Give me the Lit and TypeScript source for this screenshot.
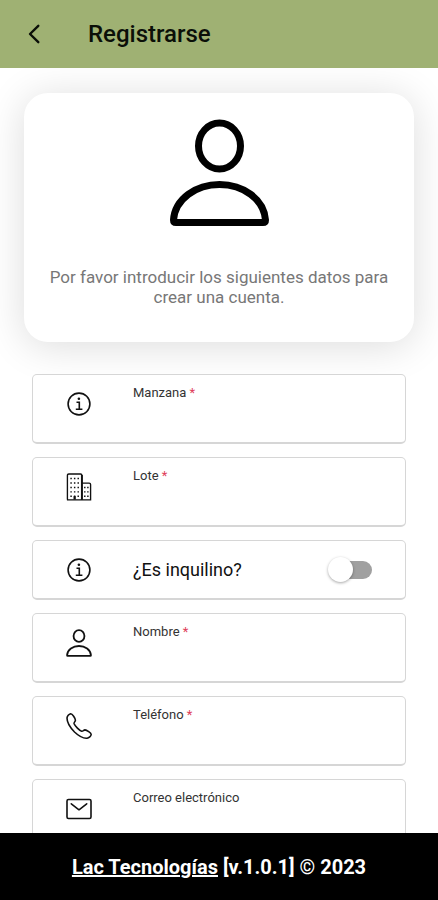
import { LitElement, html, svg, css, nothing } from "lit";
import { customElement, property, state } from "lit/decorators.js";

const icons = {
  user: {
    box: "0 0 99 108",
    art: svg`<g fill="none" stroke="currentColor" stroke-width="7" stroke-linejoin="round">
      <ellipse cx="49.5" cy="27" rx="21" ry="23" />
      <path d="M6 103.500H93Q95.500 103.500 95.500 101C94 80 73 65.500 49.500 65.500S5 80 3.500 101Q3.500 103.500 6 103.500Z" />
    </g>`,
  },
  info: {
    box: "0 0 26 26",
    art: svg`<g fill="none" stroke="currentColor" stroke-width="1.600">
      <circle cx="13" cy="13" r="10.900" />
      <path d="M10.500 11.200H13.300V18M9.800 18.200H16.400" />
      <circle cx="12.900" cy="7.700" r="1.300" fill="currentColor" stroke="none" />
    </g>`,
  },
  building: {
    box: "0 0 26 29",
    art: svg`<g fill="none" stroke="currentColor" stroke-width="1.400">
      <path d="M1 27.500V2.500Q1 1 2.500 1H14.500Q16 1 16 2.500V27.500M16 10.500H23.500Q25 10.500 25 12V27.500M0.500 27.800H25.700" />
      <path d="M16 2V27.500" stroke-width="2" />
      <g stroke-width="1.500" stroke-dasharray="1.500 3.100">
        <path d="M4.800 5V27M8.500 5V27M12.200 5V27M19 14.200V27M22.200 14.200V27" />
      </g>
      <path d="M8.500 24V27.500" stroke-width="2.400" />
    </g>`,
  },
  phone: {
    box: "0 0 26 27",
    art: svg`<path fill="none" stroke="currentColor" stroke-width="1.600" stroke-linejoin="round"
      d="M4.600 1.200C3 1.600 1 3.600 1 5.600C1 10.500 4.500 15.500 8.500 19.500C12.500 23.300 17.500 26 21 25.700C23 25.500 25 23.500 25.200 22C25.300 20.500 20.500 17.400 19 17.400C17.600 17.500 17 19 15.700 18.800C13.500 18 9 13.500 8.100 11.300C7.700 9.800 9.400 9.200 9.400 7.700C9.400 6 6.300 1 4.600 1.200Z" />`,
  },
  mail: {
    box: "0 0 26 21",
    art: svg`<g fill="none" stroke="currentColor" stroke-width="1.600" stroke-linejoin="round" stroke-linecap="round">
      <rect x="1" y="1" width="24" height="19" rx="1.500" />
      <path d="M5.300 5.300L13 11.300L20.700 5.300" />
    </g>`,
  },
};
type IconName = keyof typeof icons;

@customElement("line-icon")
class LineIcon extends LitElement {
  @property() name: IconName = "user";
  static styles = css`
    :host { display: block; }
    svg { display: block; width: 100%; height: 100%; }
  `;
  render() {
    const icon = icons[this.name];
    return html`<svg viewBox=${icon.box} aria-hidden="true">${icon.art}</svg>`;
  }
}

interface Field {
  id: string;
  label: string;
  icon: IconName;
  type: string;
  required: boolean;
}

@customElement("app-root")
class AppRoot extends LitElement {
  @state() private tenant = false;

  private lotFields: Field[] = [
    { id: "manzana", label: "Manzana", icon: "info", type: "text", required: true },
    { id: "lote", label: "Lote", icon: "building", type: "text", required: true },
  ];
  private contactFields: Field[] = [
    { id: "nombre", label: "Nombre", icon: "user", type: "text", required: true },
    { id: "telefono", label: "Teléfono", icon: "phone", type: "tel", required: true },
    { id: "correo", label: "Correo electrónico", icon: "mail", type: "email", required: false },
  ];

  static styles = css`
    :host {
      display: flex;
      flex-direction: column;
      height: 100vh;
      background: #fff;
      color: #111;
      font-family: Roboto, "Liberation Sans", sans-serif;
    }
    * { box-sizing: border-box; }
    .bar {
      flex: none;
      display: flex;
      align-items: center;
      gap: 32px;
      height: 68px;
      padding: 0 12px;
      background: #9fb173;
    }
    .back {
      display: grid;
      place-items: center;
      width: 44px;
      height: 44px;
      padding: 0;
      border: 0;
      background: none;
      color: #0b0f08;
    }
    .back svg { width: 12px; height: 20px; }
    .title { margin: 0; font-size: 24px; line-height: 32px; font-weight: 500; color: #0b0f08; }
    .content { flex: 1; min-height: 0; overflow-y: auto; scrollbar-width: none; }
    .card {
      display: flex;
      flex-direction: column;
      align-items: center;
      gap: 40px;
      margin: 25px 24px 32px;
      padding: 26px 24px 35px;
      border-radius: 24px;
      background: #fff;
      box-shadow: 0 4px 40px rgba(0, 0, 0, 0.14);
    }
    .avatar { width: 99px; height: 108px; color: #000; }
    .intro {
      margin: 0;
      font-size: 17px;
      line-height: 20px;
      text-align: center;
      color: #777;
    }
    .form { display: flex; flex-direction: column; gap: 13px; padding: 0 32px 24px; }
    .row {
      display: flex;
      gap: 41px;
      min-height: 70px;
      padding: 0 33px;
      border: 1px solid #d6d6d6;
      border-bottom-width: 2px;
      border-radius: 5px;
      background: #fff;
    }
    .row.short { min-height: 60px; align-items: center; }
    .icon { flex: none; width: 26px; height: 28px; margin-top: 15px; color: #111; }
    .short .icon { margin-top: 0; }
    .field { flex: 1; min-width: 0; display: flex; flex-direction: column; padding-top: 10px; }
    .label { font-size: 13px; line-height: 16px; color: #333; }
    .required { color: #e0405a; }
    .input {
      flex: 1;
      width: 100%;
      padding: 0;
      border: 0;
      outline: 0;
      background: none;
      color: inherit;
      font: inherit;
      font-size: 16px;
    }
    .question { flex: 1; font-size: 18px; line-height: 24px; }
    .switch {
      appearance: none;
      display: flex;
      align-items: center;
      flex: none;
      width: 38px;
      height: 18px;
      margin: 0;
      border-radius: 9px;
      background: #a0a0a0;
    }
    .switch::before {
      content: "";
      flex: none;
      width: 25px;
      height: 25px;
      margin-left: -6px;
      border-radius: 50%;
      background: #fff;
      box-shadow: 0 1px 3px rgba(0, 0, 0, 0.35);
    }
    .switch:checked { background: #9fb173; }
    .switch:checked::before { margin-left: 19px; }
    .footer {
      flex: none;
      height: 67px;
      display: flex;
      align-items: center;
      justify-content: center;
      background: #000;
      color: #fff;
      font-size: 20px;
      line-height: 24px;
      font-weight: 700;
    }
    .footer p { margin: 0; }
    .link { color: inherit; }
  `;

  private field(f: Field) {
    return html`<div class="row">
      <line-icon class="icon" name=${f.icon}></line-icon>
      <div class="field">
        <label class="label" for=${f.id}>${f.label}${f.required ? html` <span class="required">*</span>` : nothing}</label>
        <input class="input" id=${f.id} type=${f.type} ?required=${f.required} />
      </div>
    </div>`;
  }

  render() {
    return html`
      <header class="bar">
        <button class="back" type="button" aria-label="Volver">
          <svg viewBox="0 0 12 20" fill="none" stroke="currentColor" stroke-width="2.400" stroke-linecap="round" stroke-linejoin="round">
            <path d="M10.300 1.800L2 10L10.300 18.200" />
          </svg>
        </button>
        <h1 class="title">Registrarse</h1>
      </header>
      <main class="content">
        <section class="card">
          <line-icon class="avatar" name="user"></line-icon>
          <p class="intro">Por favor introducir los siguientes datos para crear una cuenta.</p>
        </section>
        <form class="form">
          ${this.lotFields.map((f) => this.field(f))}
          <div class="row short">
            <line-icon class="icon" name="info"></line-icon>
            <label class="question" for="inquilino">¿Es inquilino?</label>
            <input
              class="switch"
              id="inquilino"
              type="checkbox"
              role="switch"
              .checked=${this.tenant}
              @change=${(e: Event) => (this.tenant = (e.target as HTMLInputElement).checked)}
            />
          </div>
          ${this.contactFields.map((f) => this.field(f))}
        </form>
      </main>
      <footer class="footer">
        <p><a class="link" href="#">Lac Tecnologías</a> [v.1.0.1] © 2023</p>
      </footer>
    `;
  }
}
